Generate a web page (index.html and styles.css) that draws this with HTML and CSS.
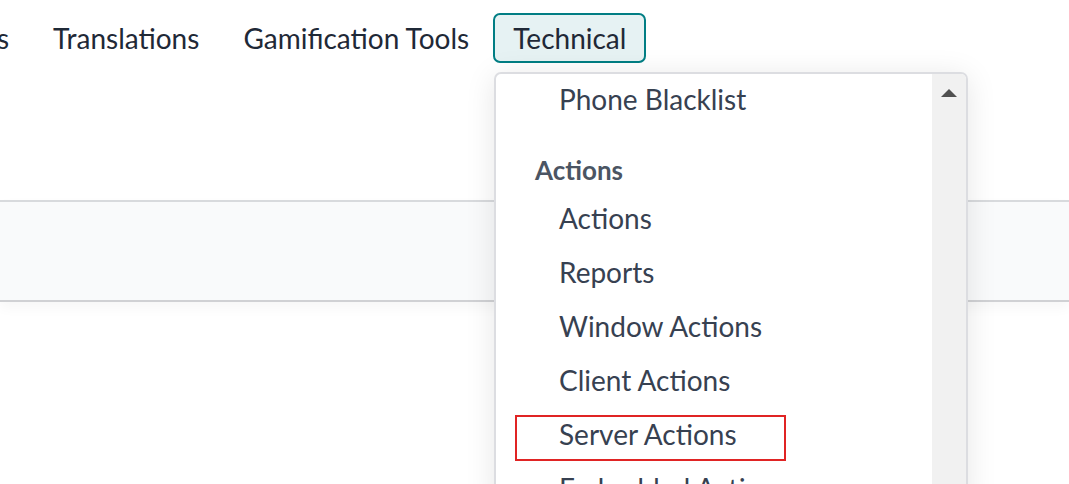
FILE: index.html
```html
<!DOCTYPE html>
<html lang="en">
<head>
    <meta charset="UTF-8">
    <meta name="viewport" content="width=device-width, initial-scale=1.0">
    <title>Settings - Technical</title>
    <link rel="stylesheet" href="styles.css">
</head>
<body>
    <div class="page">
        <header class="topbar">
            <nav class="menu-nav">
                <a class="nav-item">Users</a>
                <a class="nav-item">Translations</a>
                <a class="nav-item">Gamification Tools</a>
                <a class="nav-item open">Technical</a>
            </nav>
        </header>
        <div class="control-band"></div>

        <div class="dropdown">
            <div class="dropdown-list">
                <a class="dropdown-item">Phone Blacklist</a>
                <div class="dropdown-header">Actions</div>
                <a class="dropdown-item">Actions</a>
                <a class="dropdown-item">Reports</a>
                <a class="dropdown-item">Window Actions</a>
                <a class="dropdown-item">Client Actions</a>
                <a class="dropdown-item">Server Actions</a>
                <a class="dropdown-item">Embedded Actions</a>
            </div>
            <div class="scrollbar">
                <span class="scroll-up"></span>
            </div>
        </div>

        <div class="highlight"></div>
    </div>
</body>
</html>
```
FILE: styles.css
```css
body {
    margin: 0;
    background-color: #fff;
    font-family: Lato, "Noto Sans", sans-serif;
    color: #374151;
    overflow: hidden;
}
.page {
    position: relative;
    height: 484px;
    overflow: hidden;
}

/* top menu */

.topbar {
    height: 200px;
}
.menu-nav {
    display: flex;
    padding-top: 13px;
    margin-left: -82px;
}
.nav-item {
    display: flex;
    align-items: center;
    height: 46px;
    margin: 0 2px;
    padding: 0 18px;
    border: 2px solid transparent;
    border-radius: 7px;
    font-size: 28px;
    color: #1f2937;
    white-space: nowrap;
}
.nav-item.open {
    background-color: #e6f2f3;
    border-color: #017e84;
}

/* control panel band */

.control-band {
    height: 98px;
    background-color: #f9fafb;
    border-top: 2px solid #d8dadd;
    border-bottom: 2px solid #d0d1d4;
    box-shadow: 0 6px 12px rgba(0, 0, 0, 0.035);
}

/* dropdown */

.dropdown {
    position: absolute;
    top: 72px;
    left: 494px;
    width: 470px;
    height: 430px;
    display: flex;
    background-color: #fff;
    border: 2px solid #dcdde1;
    border-radius: 7px;
    box-shadow: 0 4px 30px rgba(0, 0, 0, 0.1);
    overflow: hidden;
}
.dropdown-list {
    flex: 1;
    display: flex;
    flex-direction: column;
    margin-top: -2px;
}
.dropdown-item {
    display: block;
    height: 54px;
    line-height: 54px;
    padding-left: 63px;
    font-size: 28px;
    color: #374151;
    white-space: nowrap;
}
.dropdown-header {
    margin-top: 23px;
    height: 42px;
    line-height: 42px;
    padding-left: 39px;
    font-size: 26px;
    font-weight: 700;
    color: #4b5563;
}
.scrollbar {
    width: 34px;
    background-color: #f1f1f1;
    display: flex;
    justify-content: center;
}
.scroll-up {
    margin-top: 15px;
    width: 0;
    height: 0;
    border-left: 8px solid transparent;
    border-right: 8px solid transparent;
    border-bottom: 8px solid #505050;
}

/* annotation box */

.highlight {
    position: absolute;
    top: 415px;
    left: 515px;
    width: 267px;
    height: 42px;
    border: 2px solid #e02424;
}
```
